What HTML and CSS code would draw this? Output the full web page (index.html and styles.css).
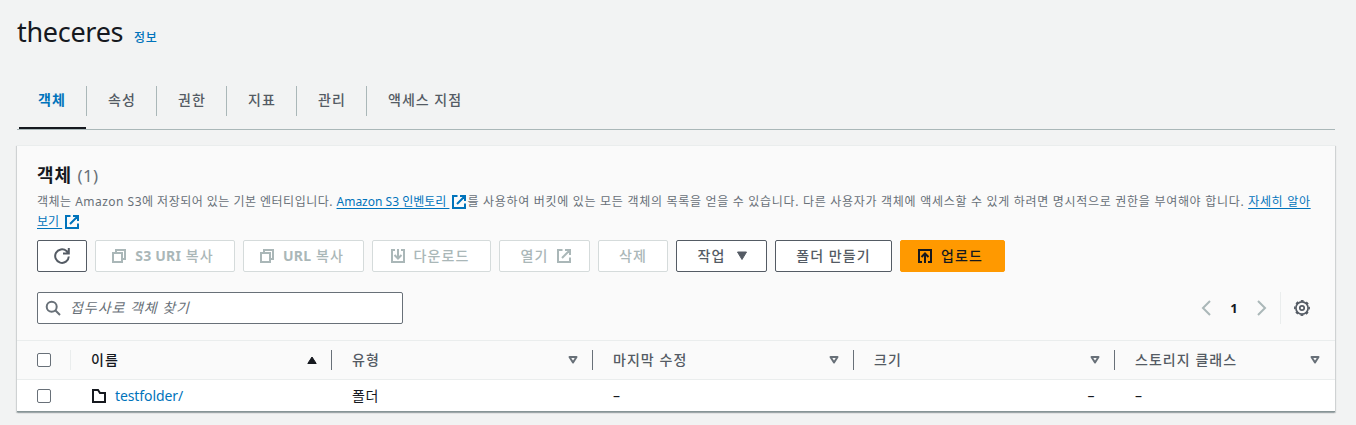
FILE: index.html
```
<!DOCTYPE html>
<html lang="ko">
<head>
<meta charset="utf-8">
<title>theceres</title>
<link rel="stylesheet" href="styles.css">
</head>
<body>
<svg class="defs" width="0" height="0">
  <symbol id="ext" viewBox="0 0 16 16"><path d="M6.500 2H2v12h12V9.500M9 2h5v5M13.500 2.500L6 10" fill="none" stroke="currentColor" stroke-width="2"/></symbol>
  <symbol id="copy" viewBox="0 0 16 16"><path d="M2 5h9v9H2zM5 5V2h9v9h-3" fill="none" stroke="currentColor" stroke-width="2"/></symbol>
  <symbol id="sort" viewBox="0 0 10 8"><path d="M1.500 1h7L5 6.500z" fill="none" stroke="currentColor" stroke-width="2" stroke-linejoin="round"/></symbol>
</svg>
<header class="page-head"><h1 class="title">theceres</h1><a class="info">정보</a></header>
<nav class="tabs">
  <a class="tab active"><span>객체</span></a>
  <a class="tab"><span>속성</span></a>
  <a class="tab"><span>권한</span></a>
  <a class="tab"><span>지표</span></a>
  <a class="tab"><span>관리</span></a>
  <a class="tab last"><span>액세스 지점</span></a>
</nav>
<main class="card">
  <section class="card-head">
    <h2 class="heading">객체 <span class="count">(1)</span></h2>
    <p class="desc"><span class="lead">객체는 Amazon S3에 저장되어 있는 기본 엔터티입니다. </span><a class="link inv">Amazon S3 인벤토리 </a><svg class="ext"><use href="#ext"/></svg><span class="body-text">를 사용하여 버킷에 있는 모든 객체의 목록을 얻을 수 있습니다. 다른 사용자가 객체에 액세스할 수 있게 하려면 명시적으로 권한을 부여해야 합니다. </span><a class="link"><span class="more">자세히 알아</span><br>보기 </a><svg class="ext"><use href="#ext"/></svg></p>
    <div class="actions">
      <button class="btn w-refresh"><svg class="refresh" viewBox="0 0 18 18"><path d="M15.800 9.500A6.800 6.800 0 1 1 13.500 4L15.500 6M15.800 1v5.500H10" fill="none" stroke="currentColor" stroke-width="2"/></svg></button>
      <button class="btn off w-uri"><svg class="icon"><use href="#copy"/></svg><span><b>S3 URI</b> 복사</span></button>
      <button class="btn off w-url"><svg class="icon"><use href="#copy"/></svg><span><b>URL</b> 복사</span></button>
      <button class="btn off w-down"><svg class="icon" viewBox="0 0 16 16"><path d="M5 2H2v12h12V2h-3M8 1v9M4.500 7L8 10.500 11.500 7" fill="none" stroke="currentColor" stroke-width="2"/></svg><span>다운로드</span></button>
      <button class="btn off w-open"><span>열기</span><svg class="icon"><use href="#ext"/></svg></button>
      <button class="btn off w-del"><span>삭제</span></button>
      <button class="btn w-act"><span>작업</span><svg class="caret" viewBox="0 0 12 10"><path d="M1.500 1h9L6 8.500z" fill="currentColor" stroke="currentColor" stroke-linejoin="round"/></svg></button>
      <button class="btn w-mk"><span>폴더 만들기</span></button>
      <button class="btn primary"><svg class="icon" viewBox="0 0 16 16"><path d="M5 14H2V2h12v12h-3M8 15V6M4.500 9L8 5.500 11.500 9" fill="none" stroke="currentColor" stroke-width="2"/></svg><span>업로드</span></button>
    </div>
    <div class="filters">
      <div class="search"><svg class="glass" viewBox="0 0 16 16"><circle cx="6.700" cy="6.700" r="5" fill="none" stroke="currentColor" stroke-width="2"/><path d="M10.500 10.500L15 15" stroke="currentColor" stroke-width="2"/></svg><span>접두사로 객체 찾기</span></div>
      <div class="pager">
        <svg class="chev" viewBox="0 0 10 16"><path d="M9 1L2 8l7 7" fill="none" stroke="currentColor" stroke-width="2"/></svg>
        <span class="page">1</span>
        <svg class="chev" viewBox="0 0 10 16"><path d="M1 1l7 7-7 7" fill="none" stroke="currentColor" stroke-width="2"/></svg>
        <div class="settings"><svg class="gear" viewBox="0 0 16 16" fill="none" stroke="currentColor"><circle cx="8" cy="8" r="6.100" stroke-width="1.700"/><circle cx="8" cy="8" r="7.200" stroke-width="1.500" stroke-dasharray="2.827 2.827" stroke-dashoffset="1.414"/><circle cx="8" cy="8" r="2.200" stroke-width="1.700"/></svg></div>
      </div>
    </div>
  </section>
  <div class="row head">
    <div class="cell check"><i class="box"></i></div>
    <div class="cell sorted"><span>이름</span><svg class="asc" viewBox="0 0 10 8"><path d="M5 1L.8 7.500h8.400z" fill="currentColor" stroke="currentColor" stroke-linejoin="round"/></svg></div>
    <div class="cell"><span>유형</span><svg class="sort"><use href="#sort"/></svg></div>
    <div class="cell"><span>마지막 수정</span><svg class="sort"><use href="#sort"/></svg></div>
    <div class="cell"><span>크기</span><svg class="sort"><use href="#sort"/></svg></div>
    <div class="cell"><span>스토리지 클래스</span><svg class="sort"><use href="#sort"/></svg></div>
  </div>
  <div class="row data">
    <div class="cell check"><i class="box"></i></div>
    <div class="cell name"><svg class="folder" viewBox="0 0 14 14"><path d="M1 1h5l2 3h5v9H1z" fill="none" stroke="currentColor" stroke-width="2"/></svg><a class="file">testfolder/</a></div>
    <div class="cell"><span>폴더</span></div>
    <div class="cell"><span>–</span></div>
    <div class="cell size"><span>–</span></div>
    <div class="cell"><span>–</span></div>
  </div>
</main>
</body>
</html>
```

FILE: styles.css
```
* { box-sizing: border-box; }
body { margin: 0; padding: 0 21px 0 17px; height: 425px; overflow: hidden; background: #f2f3f3; color: #16191f; font: 14px/22px "Noto Sans", "Noto Sans CJK KR", sans-serif; }
h1, h2, p { margin: 0; font-weight: 400; }
svg { flex: none; }
.defs { position: absolute; }
.page-head { display: flex; align-items: baseline; height: 86px; padding-top: 14px; white-space: nowrap; }
.title { width: 117px; font-size: 27px; line-height: 36px; letter-spacing: -.3px; }
.info { color: #0073bb; font-size: 12px; font-weight: 500; letter-spacing: .6px; }
.tabs { display: flex; height: 44px; padding-left: 2px; border-bottom: 1px solid #aab7b8; }
.tab { width: 70px; height: 44px; color: #545b64; font-weight: 500; letter-spacing: 1.1px; white-space: nowrap; }
.tab span { display: block; height: 30px; line-height: 28px; padding-left: 19px; border-right: 1px solid #aab7b8; }
.active { width: 68px; color: #0073bb; font-weight: 700; }
.active::after { content: ""; display: block; width: 67px; height: 2px; margin-top: 11px; background: #16191f; }
.last { width: 120px; letter-spacing: 1px; }
.last span { border: 0; padding-left: 21px; }
.tab:not(.active):not(.last) span { padding-left: 21px; }
.card { height: 267px; margin-top: 15px; background: #fff; border-top: 1px solid #eaeded; border-bottom: 1px solid #879596; box-shadow: 0 1px 1px rgba(0,28,36,.15), 1px 1px 1px rgba(0,28,36,.12), -1px 1px 1px rgba(0,28,36,.12); }
.card-head { height: 194px; padding: 17px 20px 0; background: #fafafa; }
.heading { height: 27px; font-size: 18px; line-height: 25px; font-weight: 700; letter-spacing: .9px; }
.count { color: #687078; font-weight: 400; font-size: 17px; letter-spacing: .3px; }
.desc { height: 40px; padding-top: 2px; font-size: 12px; line-height: 20px; color: #687078; white-space: nowrap; }
.lead { letter-spacing: .48px; }
.body-text { letter-spacing: .7px; }
.more { letter-spacing: .7px; }
.link { color: #0073bb; text-decoration: underline; text-underline-offset: 2px; white-space: pre; }
.ext { width: 16px; height: 16px; color: #0073bb; vertical-align: -4px; margin: 0 0 0 2px; }
.actions { display: flex; gap: 8px; margin-top: 10px; }
.btn { display: flex; align-items: center; justify-content: center; gap: 8px; height: 32px; padding: 0; border: 1px solid #545b64; border-radius: 2px; background: #fff; color: #545b64; font: 500 14px/20px "Noto Sans", "Noto Sans CJK KR", sans-serif; letter-spacing: 1.1px; white-space: nowrap; }
.btn b { letter-spacing: .2px; }
.off { color: #aab7b8; border-color: #d5dbdb; }
.icon { width: 16px; height: 16px; }
.w-refresh { width: 50px; }
.w-uri { width: 140px; padding-right: 5px; }
.w-url { width: 121px; padding-right: 4px; }
.w-down { width: 119px; padding-right: 4px; }
.w-open { width: 91px; padding-left: 4px; }
.w-del { width: 70px; }
.w-act { width: 91px; gap: 11px; padding-left: 3px; }
.w-mk { width: 117px; }
.refresh { width: 18px; height: 18px; }
.caret { width: 12px; height: 10px; }
.primary { width: 105px; padding-right: 5px; background: #f90; border-color: #f90; color: #16191f; }
.filters { display: flex; justify-content: space-between; margin-top: 20px; }
.search { display: flex; align-items: center; width: 366px; height: 32px; border: 1px solid #687078; border-radius: 2px; background: #fff; padding-left: 7px; gap: 9px; color: #687078; font-style: italic; letter-spacing: .95px; }
.glass { width: 16px; height: 16px; }
.pager { display: flex; align-items: center; height: 32px; color: #aab7b8; }
.chev { width: 10px; height: 16px; }
.page { width: 46px; text-align: center; color: #16191f; font-size: 13px; font-weight: 700; }
.settings { display: flex; align-items: center; justify-content: flex-end; height: 32px; width: 30px; margin: 0 5px 0 13px; border-left: 1px solid #eaeded; color: #545b64; }
.gear { width: 16px; height: 16px; }
.row { display: grid; grid-template-columns: 54px repeat(4, 261px) 1fr; }
.head { height: 40px; background: #fafafa; border-top: 1px solid #eaeded; border-bottom: 1px solid #eaeded; color: #545b64; font-weight: 500; letter-spacing: 1.05px; }
.cell { display: flex; align-items: center; padding-left: 20px; position: relative; white-space: nowrap; }
.head .cell { justify-content: space-between; padding-right: 11px; }
.head .cell:not(:last-child)::after { content: ""; position: absolute; right: 0; top: 9px; height: 20px; width: 1px; background: #687078; }
.head .check::after { background: #eaeded !important; }
.box { width: 14px; height: 14px; border: 1px solid #687078; border-radius: 2px; background: #fff; }
.sorted { color: #16191f; }
.sort, .asc { width: 10px; height: 8px; margin-right: 4px; }
.sort { color: #687078; }
.data { height: 32px; }
.data span { letter-spacing: .6px; }
.name { gap: 9px; }
.folder { width: 14px; height: 14px; margin-left: 1px; }
.file { color: #0073bb; letter-spacing: -.1px; }
.size { justify-content: flex-end; padding-right: 20px; }
```
